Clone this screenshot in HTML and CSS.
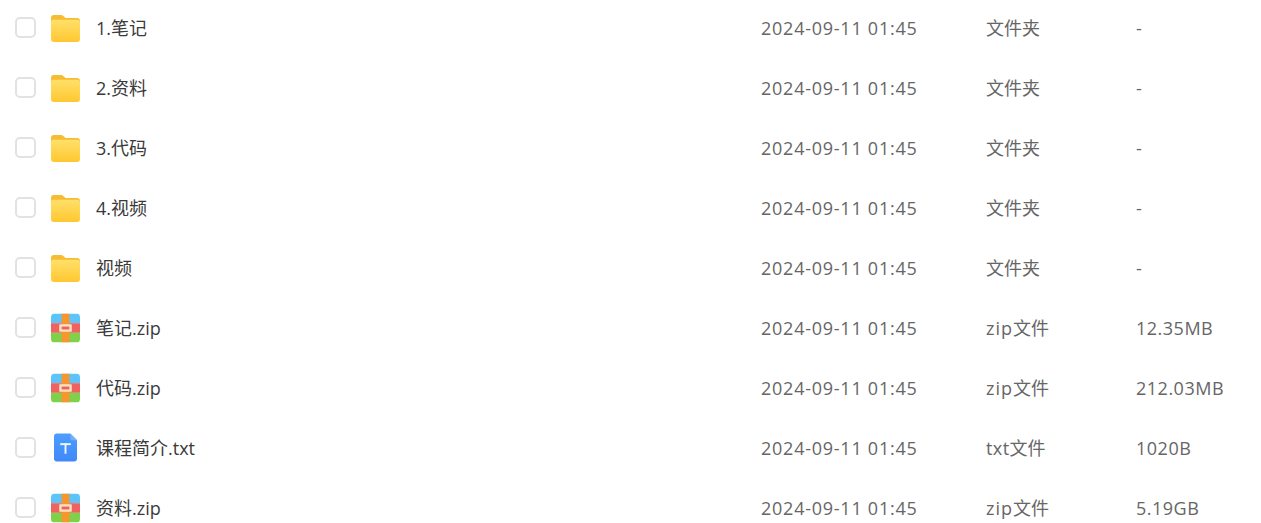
FILE: index.html
```html
<!DOCTYPE html>
<html lang="zh">
<head>
<meta charset="utf-8">
<title>文件列表</title>
<link rel="stylesheet" href="styles.css">
</head>
<body>
<svg class="defs" width="0" height="0" aria-hidden="true">
  <defs>
    <linearGradient id="fg" x1="0" y1="0" x2="0" y2="1"><stop offset="0" stop-color="#ffe06a"/><stop offset="1" stop-color="#ffc730"/></linearGradient>
    <linearGradient id="tg" x1="0" y1="0" x2="0" y2="1"><stop offset="0" stop-color="#4d9dff"/><stop offset="1" stop-color="#4088f8"/></linearGradient>
    <symbol id="folder" viewBox="0 0 30 28">
      <path d="M0 3a3 3 0 0 1 3-3h7c1.500 0 2.500.6 3.400 1.600L15 3.200h12a3 3 0 0 1 3 3V12H0z" fill="#f7bc30"/>
      <path d="M0 7.500a2.500 2.500 0 0 1 2.500-2.500h25A2.500 2.500 0 0 1 30 7.500V25a3 3 0 0 1-3 3H3a3 3 0 0 1-3-3z" fill="url(#fg)"/>
    </symbol>
    <symbol id="zip" viewBox="0 0 30 30">
      <clipPath id="zc"><rect width="30" height="30" rx="4"/></clipPath>
      <g clip-path="url(#zc)">
        <rect width="30" height="10" fill="#5cc4f8"/>
        <rect y="10" width="30" height="10" fill="#f0625f"/>
        <rect y="20" width="30" height="10" fill="#7fd14a"/>
        <rect x="11" width="8" height="30" fill="#f7962f"/>
        <rect x="8.500" y="11" width="13" height="8" rx="1" fill="#fbe3c0"/>
        <rect x="11" y="13.500" width="8" height="3" fill="#f0625f"/>
      </g>
    </symbol>
    <symbol id="txt" viewBox="0 0 24 29">
      <path d="M3 0h14l7 7v19a3 3 0 0 1-3 3H3a3 3 0 0 1-3-3V3a3 3 0 0 1 3-3z" fill="url(#tg)"/>
      <path d="M17 0l7 7h-5a2 2 0 0 1-2-2z" fill="#74aeff"/>
      <rect x="6.500" y="10" width="11" height="2" fill="#eef5ff"/>
      <rect x="11" y="10" width="2" height="11" fill="#eef5ff"/>
    </symbol>
  </defs>
</svg>
<ul class="list">
  <li class="row"><span class="check"></span><span class="icon"><svg class="i-folder"><use href="#folder"/></svg></span><span class="name">1.笔记</span><span class="date">2024-09-11 01:45</span><span class="type">文件夹</span><span class="size">-</span></li>
  <li class="row"><span class="check"></span><span class="icon"><svg class="i-folder"><use href="#folder"/></svg></span><span class="name">2.资料</span><span class="date">2024-09-11 01:45</span><span class="type">文件夹</span><span class="size">-</span></li>
  <li class="row"><span class="check"></span><span class="icon"><svg class="i-folder"><use href="#folder"/></svg></span><span class="name">3.代码</span><span class="date">2024-09-11 01:45</span><span class="type">文件夹</span><span class="size">-</span></li>
  <li class="row"><span class="check"></span><span class="icon"><svg class="i-folder"><use href="#folder"/></svg></span><span class="name">4.视频</span><span class="date">2024-09-11 01:45</span><span class="type">文件夹</span><span class="size">-</span></li>
  <li class="row"><span class="check"></span><span class="icon"><svg class="i-folder"><use href="#folder"/></svg></span><span class="name">视频</span><span class="date">2024-09-11 01:45</span><span class="type">文件夹</span><span class="size">-</span></li>
  <li class="row"><span class="check"></span><span class="icon"><svg class="i-zip"><use href="#zip"/></svg></span><span class="name">笔记.zip</span><span class="date">2024-09-11 01:45</span><span class="type"><span class="ext">zip</span>文件</span><span class="size">12.35MB</span></li>
  <li class="row"><span class="check"></span><span class="icon"><svg class="i-zip"><use href="#zip"/></svg></span><span class="name">代码.zip</span><span class="date">2024-09-11 01:45</span><span class="type"><span class="ext">zip</span>文件</span><span class="size">212.03MB</span></li>
  <li class="row"><span class="check"></span><span class="icon"><svg class="i-txt"><use href="#txt"/></svg></span><span class="name">课程简介.txt</span><span class="date">2024-09-11 01:45</span><span class="type"><span class="ext-t">txt</span>文件</span><span class="size">1020B</span></li>
  <li class="row"><span class="check"></span><span class="icon"><svg class="i-zip"><use href="#zip"/></svg></span><span class="name">资料.zip</span><span class="date">2024-09-11 01:45</span><span class="type"><span class="ext">zip</span>文件</span><span class="size">5.19GB</span></li>
</ul>
</body>
</html>
```
FILE: styles.css
```css
html, body {
  margin: 0;
  padding: 0;
  height: 100%;
  overflow: hidden;
  background: #fff;
}
body {
  font-family: "Open Sans", "Noto Sans CJK SC", sans-serif;
  font-size: 18px;
}
.defs {
  display: block;
  height: 0;
}
.list {
  list-style: none;
  margin: -2px 0 0;
  padding: 0 0 0 15px;
}
.row {
  display: flex;
  align-items: center;
  height: 60px;
}
.check {
  box-sizing: border-box;
  flex: none;
  width: 21px;
  height: 21px;
  margin-right: 15px;
  margin-bottom: 1px;
  border: 2px solid #e2e2e2;
  border-radius: 5px;
}
.icon {
  flex: none;
  display: flex;
  justify-content: center;
  width: 29px;
  margin-right: 16px;
}
.i-folder { width: 29px; height: 27px; margin-top: 1px; }
.i-zip { width: 29px; height: 30px; }
.i-txt { width: 23px; height: 29px; margin-top: -1px; }
.name {
  flex: none;
  width: 665px;
  padding-bottom: 2px;
  color: #3a3a3a;
}
.date {
  flex: none;
  width: 225px;
  letter-spacing: 0.75px;
  color: #666;
}
.type {
  flex: none;
  width: 150px;
  padding-bottom: 2px;
  color: #666;
}
.ext {
  letter-spacing: 1px;
}
.ext-t {
  letter-spacing: 0.4px;
}
.size {
  flex: none;
  letter-spacing: 0.5px;
  color: #666;
}
```
